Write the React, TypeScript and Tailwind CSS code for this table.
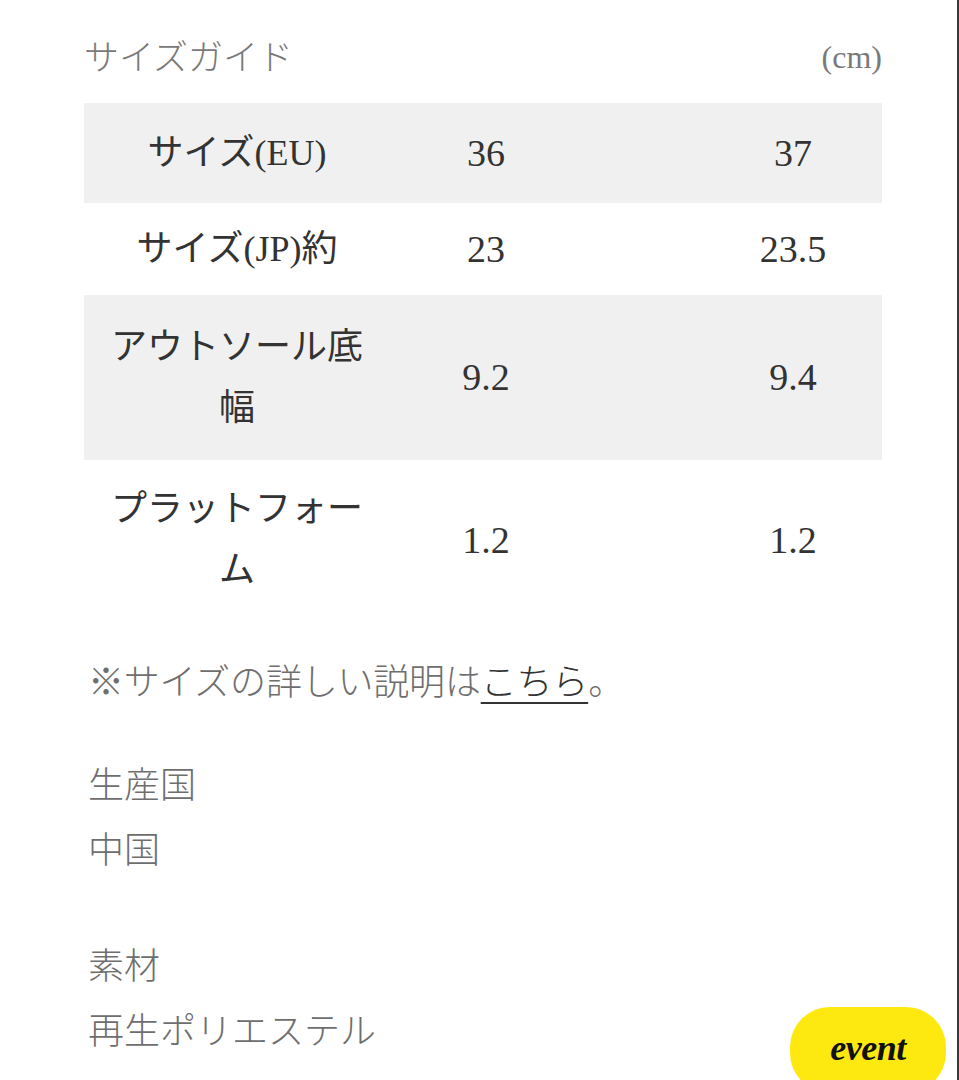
import React from "react";

type Row = { label: string; a: string; b: string; h: string; bg: boolean };

const rows: Row[] = [
  { label: "サイズ(EU)", a: "36", b: "37", h: "h-[100px]", bg: true },
  { label: "サイズ(JP)約", a: "23", b: "23.5", h: "h-[92px]", bg: false },
  { label: "アウトソール底幅", a: "9.2", b: "9.4", h: "h-[165px]", bg: true },
  { label: "プラットフォーム", a: "1.2", b: "1.2", h: "h-[160px]", bg: false },
];

const mixed = { fontFamily: '"Liberation Serif", "Noto Sans CJK JP", serif' };
const gothic = { fontFamily: '"Noto Sans CJK JP", sans-serif' };

export default function App() {
  return (
    <div className="relative w-[959px] h-[1080px] overflow-hidden bg-white border-r-2 border-[#3a3a3a]">
      <div className="pl-[84px] pr-[75px] pt-[34px]">
        {/* Header */}
        <div className="flex items-center justify-between h-[46px] text-[#7a7a7a]">
          <span className="text-[35px] font-light mt-[4px]" style={mixed}>サイズガイド</span>
          <span className="text-[32px]" style={mixed}>(cm)</span>
        </div>

        {/* Size table */}
        <div className="mt-[23px]">
          {rows.map((r) => (
            <div
              key={r.label}
              className={`grid grid-cols-[306px_192px_1fr] items-center ${r.h} ${r.bg ? "bg-[#f0f0f0]" : "bg-white"} text-[#333]`}
            >
              <div className="px-[26px] text-center text-[36px] leading-[61px]" style={mixed}>
                {r.label}
              </div>
              <div className="text-center text-[38px]" style={mixed}>{r.a}</div>
              <div className="pl-[122px] text-center text-[38px]" style={mixed}>{r.b}</div>
            </div>
          ))}
        </div>

        {/* Notes */}
        <div className="pl-[4px] text-[#6e6e6e] font-light" style={gothic}>
          <p className="mt-[36px] text-[36px] leading-[46px] tracking-[-0.2px]">
            ※サイズの詳しい説明は
            <span className="text-[#333] underline decoration-[2px] underline-offset-[7px]">こちら</span>。
          </p>

          <p className="mt-[57px] text-[36px] leading-[46px]">生産国</p>
          <p className="mt-[19px] text-[36px] leading-[46px]">中国</p>

          <p className="mt-[70px] text-[36px] leading-[46px]">素材</p>
          <p className="mt-[19px] text-[36px] leading-[46px]">再生ポリエステル</p>
        </div>
      </div>

      {/* event badge */}
      <div className="absolute left-[790px] top-[1007px] w-[156px] h-[86px] rounded-[40px] bg-[#fde910] flex items-start justify-center pt-[14px]">
        <span
          className="text-[36px] italic font-bold text-[#111] tracking-[-0.5px]"
          style={{ fontFamily: '"Liberation Serif", serif' }}
        >
          event
        </span>
      </div>
    </div>
  );
}
